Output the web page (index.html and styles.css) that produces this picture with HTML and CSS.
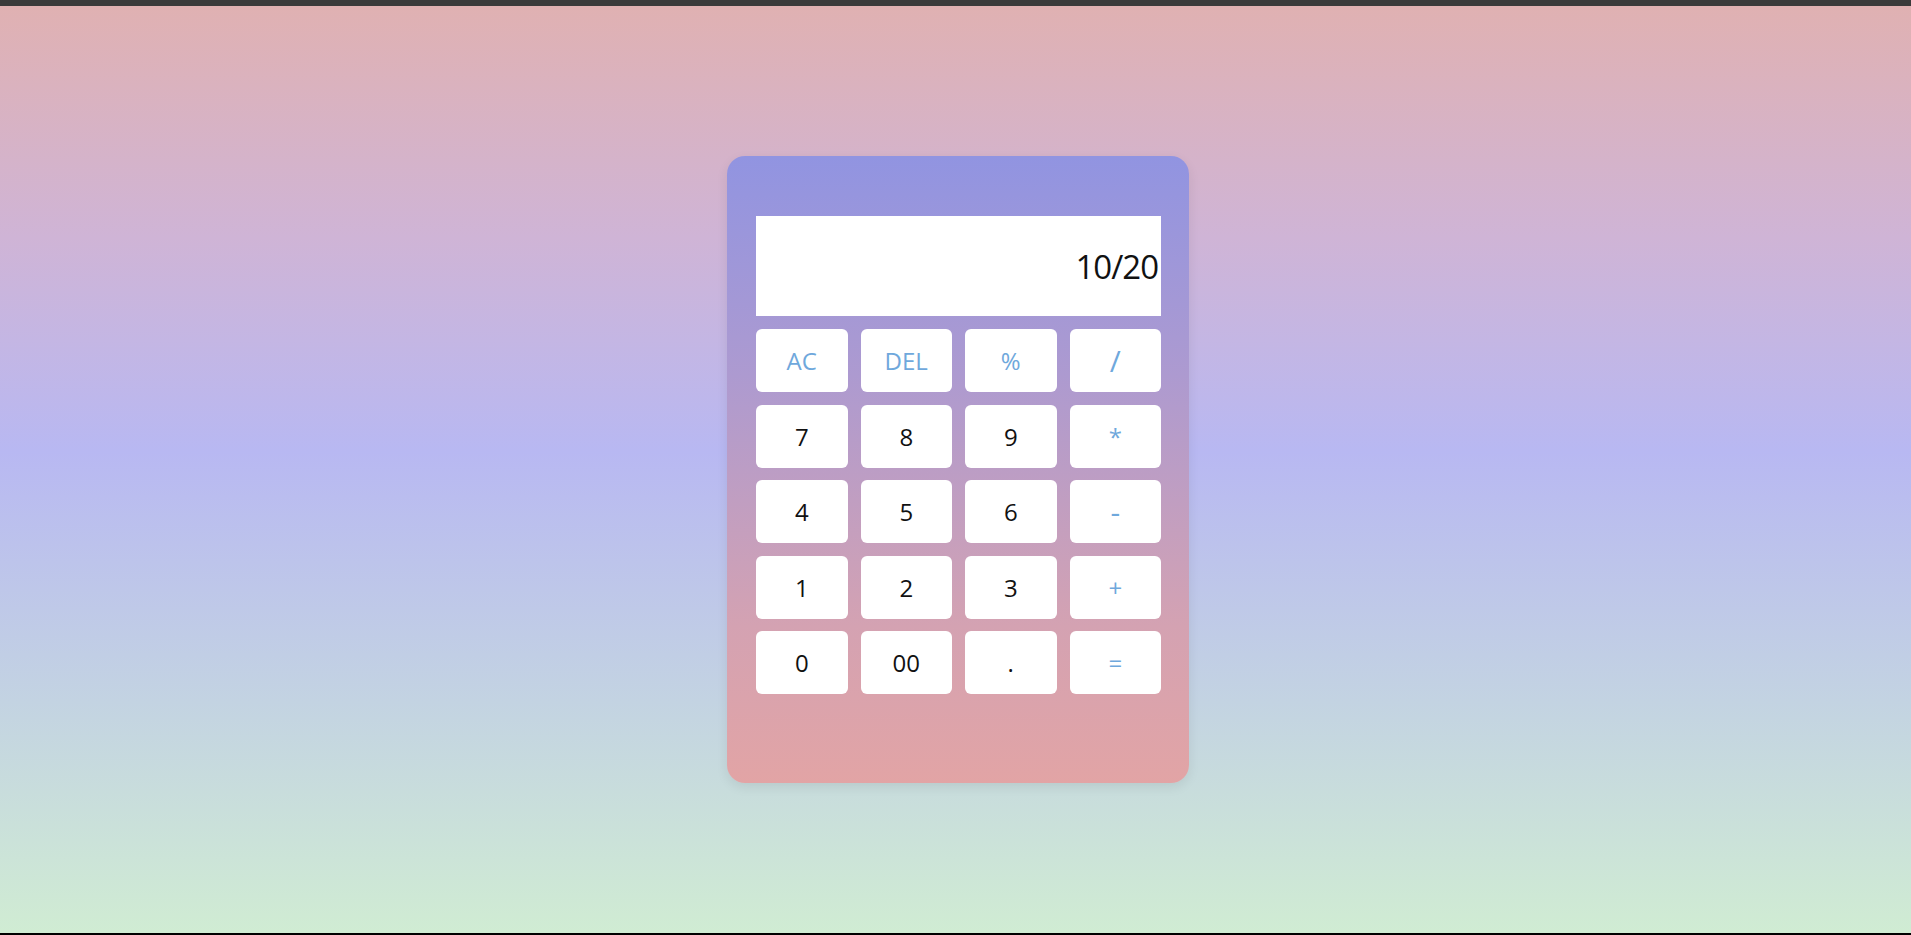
FILE: index.html
```html
<!DOCTYPE html>
<html lang="en">
<head>
<meta charset="utf-8">
<title>Calculator</title>
<link rel="stylesheet" href="styles.css">
</head>
<body>
<div class="topbar"></div>
<main class="stage">
  <div class="calculator">
    <div class="display">10/20</div>
    <div class="keys">
      <button class="key op">AC</button>
      <button class="key op">DEL</button>
      <button class="key op">%</button>
      <button class="key op slash">/</button>
      <button class="key">7</button>
      <button class="key">8</button>
      <button class="key">9</button>
      <button class="key op">*</button>
      <button class="key">4</button>
      <button class="key">5</button>
      <button class="key">6</button>
      <button class="key op minus">-</button>
      <button class="key">1</button>
      <button class="key">2</button>
      <button class="key">3</button>
      <button class="key op">+</button>
      <button class="key">0</button>
      <button class="key">00</button>
      <button class="key">.</button>
      <button class="key op">=</button>
    </div>
  </div>
</main>
<div class="bottombar"></div>
</body>
</html>
```

FILE: styles.css
```css
* { box-sizing: border-box; }
html, body { margin: 0; padding: 0; height: 100%; }
body {
  display: flex;
  flex-direction: column;
  font-family: "Open Sans", "Noto Sans", sans-serif;
  overflow: hidden;
}
.topbar { height: 6px; background: #3b3b3b; flex: none; }
.bottombar { height: 2px; background: #000; flex: none; }
.stage {
  flex: 1;
  display: flex;
  align-items: center;
  justify-content: center;
  padding-left: 5px;
  background: linear-gradient(180deg, #e0b1b2 0%, #cfb4d6 25%, #b8b8f2 48%, #c3d3e2 75%, #d0ecd3 100%);
}
.calculator {
  width: 462px;
  height: 627px;
  padding: 60px 28px 0 29px;
  border-radius: 18px;
  background: linear-gradient(180deg, #9194e1 0%, #ad9ad0 35%, #d4a2b2 75%, #e2a4a5 100%);
  box-shadow: 0 4px 12px rgba(0,0,0,0.08);
}
.display {
  height: 100px;
  background: #fff;
  display: flex;
  align-items: center;
  justify-content: flex-end;
  padding-right: 3px;
  font-size: 33px;
  color: #111;
  letter-spacing: -1px;
}
.keys {
  margin-top: 13px;
  display: grid;
  grid-template-columns: repeat(4, 1fr);
  grid-auto-rows: 63px;
  column-gap: 13px;
  row-gap: 12.5px;
}
.key {
  border: none;
  border-radius: 6px;
  background: #fff;
  font-family: inherit;
  font-size: 24px;
  color: #111;
  padding: 0;
}
.key.op { color: #6fa8dc; }
.key.slash { font-size: 30px; }
.key.minus { font-size: 30px; }
```
